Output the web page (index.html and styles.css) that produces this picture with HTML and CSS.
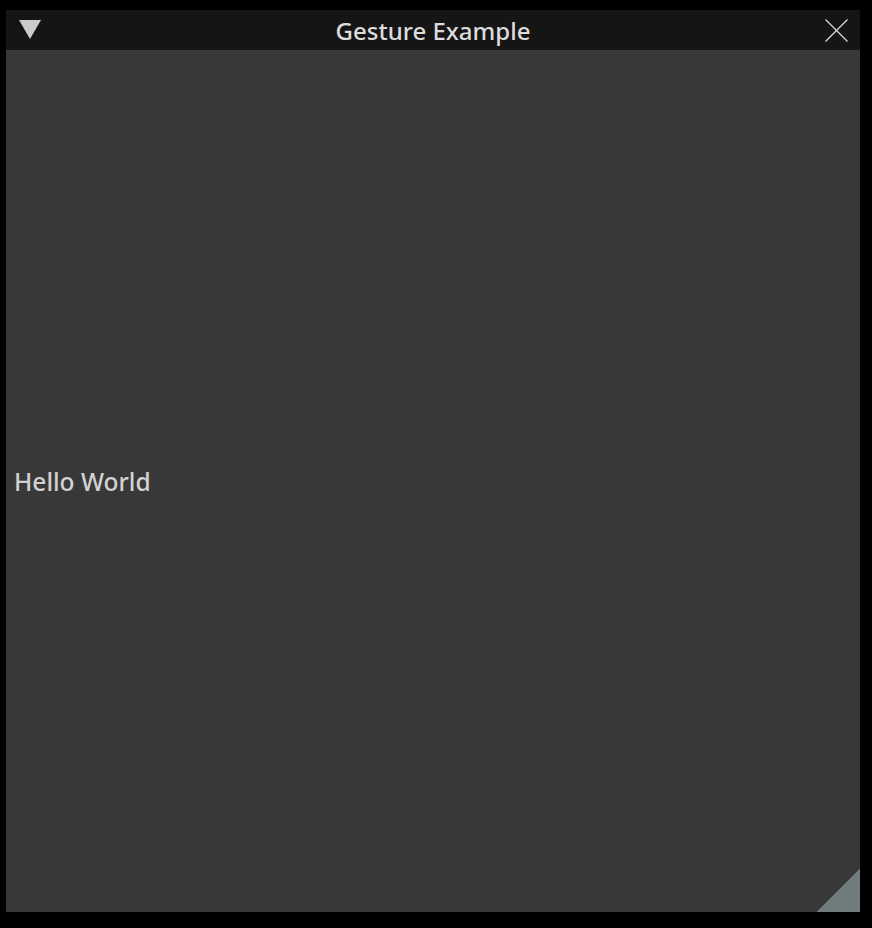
FILE: index.html
```html
<!DOCTYPE html>
<html>
<head>
<meta charset="utf-8">
<link rel="stylesheet" href="styles.css">
</head>
<body>
<div class="window">
  <div class="titlebar">
    <svg class="collapse" width="22" height="20" viewBox="0 0 22 20"><polygon points="0,0 22,0 11,19" fill="#cccccc"/></svg>
    <div class="title">Gesture Example</div>
    <svg class="close" width="23" height="23" viewBox="0 0 23 23"><path d="M0.5 0.5 L22.5 22.5 M22.5 0.5 L0.5 22.5" stroke="#dddddd" stroke-width="1.2" fill="none"/></svg>
  </div>
  <div class="content">
    <div class="hello">Hello World</div>
    <div class="grip"></div>
  </div>
</div>
</body>
</html>
```
FILE: styles.css
```css
html, body {
  margin: 0;
  padding: 0;
  background: #000000;
  width: 872px;
  height: 928px;
  overflow: hidden;
}
.window {
  margin: 10px 0 0 6px;
  width: 854px;
  height: 902px;
  display: flex;
  flex-direction: column;
  background: #383838;
}
.titlebar {
  height: 40px;
  background: #151515;
  display: flex;
  align-items: center;
  position: relative;
  flex-shrink: 0;
}
.collapse {
  position: absolute;
  left: 13px;
  top: 10px;
}
.close {
  position: absolute;
  left: 819px;
  top: 9px;
}
.title {
  flex: 1;
  text-align: center;
  font-family: "Noto Sans", "Open Sans", sans-serif;
  font-size: 24px;
  font-weight: 500;
  color: #dcdcdc;
  line-height: 40px;
  padding-top: 2px;
}
.content {
  flex: 1;
  position: relative;
  display: flex;
  align-items: center;
}
.hello {
  font-family: "Noto Sans", "Open Sans", sans-serif;
  font-size: 24.5px;
  font-weight: 500;
  color: #d2d2d2;
  padding-left: 8px;
  margin-top: 0px;
}
.grip {
  position: absolute;
  right: 0;
  bottom: 0;
  width: 43px;
  height: 43px;
  background: linear-gradient(to bottom right, transparent 50%, #6f7b7d 50%);
}
```
